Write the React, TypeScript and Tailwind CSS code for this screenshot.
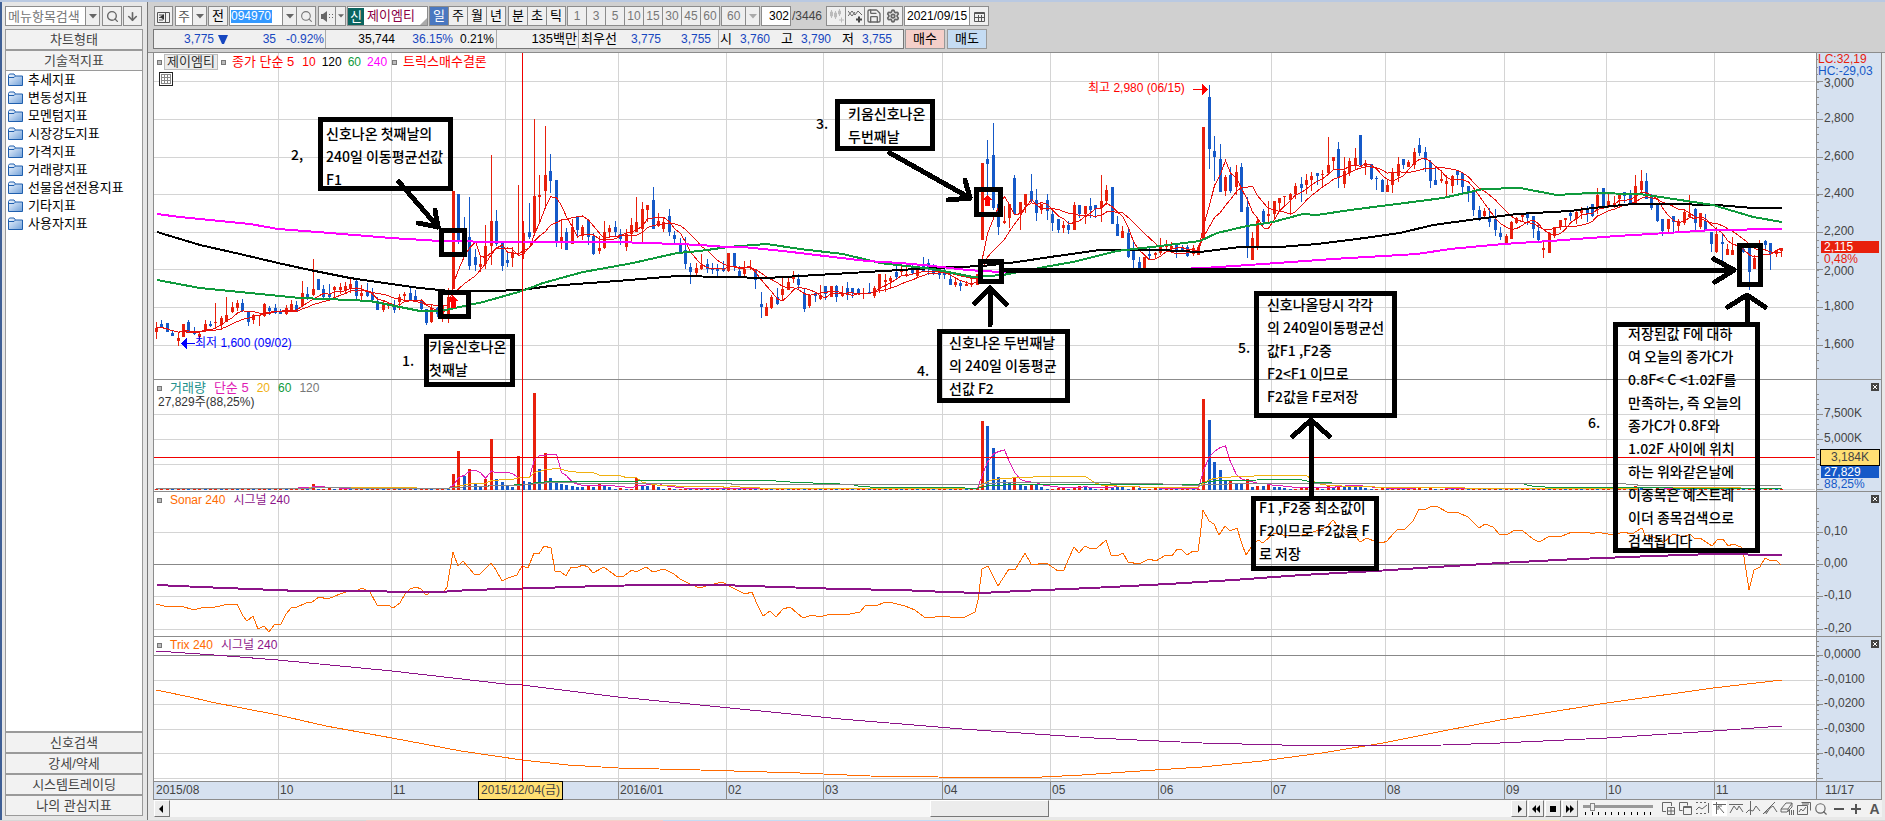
import type { ReactNode } from 'react'
import { ArrowDown, Save, Search, Settings } from 'lucide-react'

type Point = [number, number]
// direction, high, body top, body bottom, low
type Candle = [string, number, number, number, number]

const PLOT = { x: 154, y: 53, w: 1662, h: 728 }
const STEP = 5.3987

const CANDLE_DATA = `
r322 328 332 339|b320 324 327 327|b323 323 332 332|b331 333 336 336|r333 338 341 346|r324 324 337 337|b320 322 332 332|b327 332 334 335|r332 334 337 340|r320 324 331 332
b321 324 326 327|r303 322 323 327|r316 318 325 330|r297 315 322 322|r302 307 312 313|r300 303 308 311|b299 303 311 312|b311 311 322 326|r314 315 320 324|r315 315 316 326
r303 304 316 317|b306 308 311 315|b304 308 313 314|b309 311 314 314|r305 308 314 315|r300 304 311 312|b301 305 311 312|r281 293 306 306|b287 294 298 300|r259 289 295 296
b279 279 290 290|b285 289 297 299|b284 294 297 298|r286 287 290 300|r283 287 290 294|r282 286 290 293|r278 284 289 293|b280 281 296 299|r285 293 296 300|b283 292 296 297
b288 293 300 302|b297 301 310 310|r300 304 310 312|r302 303 304 309|b300 305 310 313|r294 297 302 310|r292 294 296 300|b288 293 300 301|b290 296 300 302|b299 300 309 310
b309 309 323 325|r304 308 322 323|b307 308 314 317|r300 306 316 322|r288 297 314 323|r191 191 289 289|b194 194 241 244|b217 236 246 250|b197 237 266 270|b249 257 265 271
r257 264 267 272|r225 246 264 269|r155 221 246 265|b210 221 244 246|b243 243 266 271|b253 260 263 267|r247 252 258 267|r185 253 254 254|r221 233 254 259|b203 232 237 239
r119 196 233 236|r175 195 197 224|r126 175 191 206|b154 171 181 193|b180 180 241 247|r221 237 241 249|b228 232 250 250|r219 227 244 244|b217 217 230 237|r225 227 236 240
b220 220 237 245|b233 236 254 255|r236 248 251 254|r221 232 248 249|r225 228 232 237|b221 227 232 237|b229 234 239 245|r229 234 247 251|r218 225 234 243|r197 222 232 232
r202 209 229 242|r205 205 210 222|b187 200 229 229|r213 221 226 227|r218 222 229 232|b209 216 232 236|b231 235 239 244|b238 243 253 254|b237 250 264 269|b263 267 272 284
r263 268 273 277|r254 265 269 270|b259 264 269 273|b263 268 270 274|b264 269 271 278|b261 268 271 272|r253 253 271 272|b253 253 267 271|b266 271 277 278|r261 269 274 276
r260 267 268 270|b269 270 280 289|b292 304 307 318|r303 307 316 316|r295 297 308 309|b288 297 304 305|r276 289 295 300|r276 282 290 290|r271 277 279 283|b274 279 285 290
b288 293 309 312|r294 295 306 308|b292 293 296 302|r285 295 299 300|b286 286 294 300|r286 286 297 297|b285 286 297 302|r286 293 296 297|b282 288 295 300|b288 288 293 298
b288 289 293 295|r288 293 294 299|b283 292 293 294|r286 288 296 298|r274 274 289 293|r274 280 282 292|r276 278 281 288|b266 272 277 280|r266 269 272 275|r267 274 276 277
b265 268 273 274|r266 270 276 278|b257 264 272 272|b259 263 268 275|b264 266 273 275|b270 271 275 279|b268 273 275 279|b274 279 285 285|r278 282 285 287|b281 283 286 291
r281 284 286 286|r278 283 285 287|r274 274 285 285|r163 163 240 240|b140 159 164 200|b123 155 208 210|b204 204 227 235|r206 221 223 224|r204 204 218 228|b175 178 214 214
r202 202 213 230|r194 194 205 213|b174 191 200 202|b189 200 213 221|r204 204 210 214|b194 200 211 220|b210 214 223 231|b219 219 230 233|r221 225 228 233|b221 225 230 234
r202 205 230 230|b205 205 214 218|r206 206 214 224|b198 206 210 218|b205 205 209 218|r175 201 208 222|r185 190 201 205|b187 187 224 224|b216 224 236 236|r226 231 238 238
b229 233 257 258|b242 250 260 268|b257 262 269 269|r257 257 268 268|b246 254 256 260|r252 253 255 259|r238 246 253 255|r240 245 247 250|r242 246 249 253|b243 245 250 258
b245 247 251 252|b245 247 256 257|r245 248 254 256|r245 247 255 255|r127 127 240 240|b85 97 149 169|b136 151 157 181|b144 159 192 192|r175 177 191 196|b167 175 191 193
r165 172 187 195|b163 167 212 212|b197 207 247 258|r232 238 260 260|r219 221 248 250|b209 211 222 225|r201 214 216 224|r201 201 214 218|r198 198 203 212|r196 196 197 206
r193 194 200 215|r183 186 194 199|b177 184 188 202|r174 180 185 194|r172 176 180 191|b173 173 176 185|r170 174 175 188|r137 165 173 174|r157 157 161 170|b142 149 178 188
r157 171 184 188|r158 161 173 176|r148 158 165 170|b135 135 165 167|r160 163 166 175|b164 164 179 180|b176 178 179 190|b179 180 192 192|r179 185 192 192|r168 172 185 193
r157 164 176 182|b159 159 165 169|r160 162 167 167|r148 152 165 169|b138 145 153 156|b147 152 160 172|b160 162 181 188|b167 180 185 185|r170 179 181 183|r175 181 184 196
r175 176 186 193|b170 170 175 185|b173 173 187 195|b186 186 191 202|b190 191 210 216|b206 210 218 221|r208 211 216 218|b208 218 222 227|b209 219 230 236|b227 233 237 240
r234 236 243 244|r221 222 239 239|r217 218 223 224|r213 214 217 222|b213 214 218 225|b216 216 229 238|b224 231 240 243|r242 248 250 258|r232 233 253 253|r227 227 236 238
r220 220 227 230|r218 218 220 227|b210 213 216 221|r209 212 219 224|r207 209 213 219|b206 209 214 222|b204 204 216 217|r188 195 207 214|b188 188 207 207|r192 201 206 208
r196 203 207 208|r194 195 199 208|b192 192 196 203|b190 195 203 205|r175 186 203 203|r170 181 190 195|b173 181 199 199|b194 196 208 210|b203 203 221 222|b219 219 231 236
r219 219 229 233|b216 216 222 232|r219 221 226 233|r210 212 223 225|r195 214 217 217|b208 209 223 231|r213 213 227 229|b214 221 231 231|b232 232 244 252|r227 234 252 253
b233 242 244 261|r244 249 255 255|r237 250 255 255|b244 247 252 254|b247 249 252 253|b247 248 272 290|r255 258 269 269|r240 244 250 252|b240 241 245 250|b243 243 254 270
r250 250 254 257|r248 248 251 257`

const candles: Candle[] = CANDLE_DATA.trim()
  .split(/[|\n]/)
  .map((c) => {
    const [hi, top, bottom, low] = c.slice(1).split(' ').map(Number)
    return [c[0], hi, top, bottom, low]
  })

// bars that stand out; all other days are almost flat
const VOLUME_PEAKS: Record<number, number> = {
  27: 3, 29: 6, 55: 16, 56: 39, 57: 14, 58: 21, 59: 6, 60: 4, 61: 11, 62: 51, 63: 11, 64: 8, 65: 5, 66: 3,
  67: 34, 68: 9, 69: 8, 70: 97, 71: 21, 72: 37, 73: 12, 74: 9, 75: 6, 76: 5, 77: 4, 78: 3, 79: 3, 80: 5, 81: 3,
  82: 6, 83: 4, 84: 3, 89: 12, 90: 5, 91: 4, 92: 6, 93: 3, 153: 69, 154: 64, 155: 42, 156: 13, 157: 10, 158: 8,
  159: 13, 160: 6, 161: 4, 162: 6, 163: 5, 164: 3, 168: 3, 171: 4, 172: 3, 176: 5, 177: 3, 178: 3, 179: 3,
  181: 4, 194: 91, 195: 70, 196: 28, 197: 20, 198: 9, 199: 10, 200: 7, 201: 7, 202: 11, 203: 3, 204: 4, 205: 4,
  206: 5, 207: 3, 208: 3, 213: 3, 217: 4, 218: 3, 219: 5, 220: 4, 221: 4, 222: 3, 223: 3, 234: 3, 274: 4, 275: 3,
}
const volumes = candles.map((_, i) => VOLUME_PEAKS[i] ?? 1 + ((i * 7) % 3) / 3)

const candleX = (i: number) => Math.round(156 + i * STEP) + 0.5

function average(values: number[], period: number): Point[] {
  return values.map((_, i) => {
    const part = values.slice(Math.max(0, i - period + 1), i + 1)
    return [candleX(i), part.reduce((a, b) => a + b, 0) / part.length]
  })
}

const closes = candles.map((c) => (c[0] === 'r' ? c[2] : c[3]))
const toVolumeY = (pts: Point[]): Point[] => pts.map(([x, v]) => [x, 489.5 - v])

const parse = (s: string): Point[] => s.split(' ').map((p) => p.split(',').map(Number) as Point)
const join = (pts: Point[]) => pts.map((p) => p.join(',')).join(' ')

const MA240 = parse(
  '157,214 180,217 250,224 278,229 330,233 391,238 440,241 505,242 617,242 677,244 700,245 727,247 743,247 783,251 833,257 867,261 900,263 933,266 967,270 1000,272 1100,272 1204,268 1263,264 1333,259 1417,254 1450,249 1503,244 1550,241 1617,236 1667,233 1713,230 1782,229'
)
const MA120 = parse(
  '157,232 200,245 240,254 278,263 310,270 350,278 391,284 420,288 450,291 490,291 522,290 550,286 617,281 677,276 727,277 767,278 800,276 867,272 933,268 983,266 1017,262 1050,257 1100,250 1160,250 1200,252 1240,247 1280,247 1317,244 1357,239 1400,233 1433,225 1477,219 1517,214 1570,211 1593,208 1633,204 1667,204 1717,205 1753,208 1782,208'
)
const MA60 = parse(
  '157,280 200,288 250,293 300,298 350,300 370,301 400,307 420,311 441,311 455,308 483,302 522,291 543,283 583,272 600,269 633,263 677,253 700,251 728,247 767,244 800,249 843,254 880,263 933,269 973,277 1003,275 1050,266 1073,262 1117,251 1160,246 1200,241 1217,233 1247,226 1273,222 1303,214 1317,215 1350,210 1397,204 1443,198 1483,189 1520,188 1557,195 1590,193 1640,194 1667,198 1713,205 1753,217 1782,222'
)
const SONAR = parse(
  '156,604 168,607 181,606 194,610 204,607 211,608 224,605 237,604 243,616 247,621 253,616 258,629 264,626 269,632 274,625 281,624 286,614 291,608 297,607 306,603 312,602 319,597 328,599 340,594 349,591 355,592 362,588 370,592 377,605 388,605 393,608 400,603 405,594 410,589 416,587 421,589 426,595 431,592 443,593 447,587 453,552 458,566 463,561 474,574 480,574 491,563 496,570 502,581 508,578 517,575 522,566 528,568 534,553 539,554 544,546 551,548 555,571 561,572 566,576 571,567 578,567 583,565 588,567 593,573 604,567 616,576 624,576 632,570 636,572 646,567 653,572 664,569 674,574 680,579 688,583 699,588 710,585 722,582 735,589 745,594 752,592 757,604 763,616 770,611 776,617 783,609 790,607 797,613 803,618 812,615 820,617 830,614 845,615 860,612 866,605 876,606 885,602 893,603 905,606 915,610 924,617 935,617 945,616 955,618 965,617 975,612 978,600 982,569 988,566 998,586 1009,569 1015,570 1025,553 1031,564 1036,565 1041,563 1048,564 1058,571 1064,570 1069,558 1074,547 1079,553 1085,546 1091,549 1097,548 1106,540 1111,555 1117,556 1123,553 1128,562 1139,564 1149,559 1156,561 1166,555 1172,556 1177,549 1182,550 1187,555 1193,551 1198,551 1200,537 1203,510 1209,521 1214,524 1219,535 1225,526 1230,531 1237,528 1241,541 1246,555 1252,546 1258,540 1263,543 1274,533 1283,535 1290,536 1302,535 1313,532 1327,527 1333,520 1340,529 1346,535 1351,530 1360,542 1367,538 1376,542 1382,543 1387,541 1394,533 1398,529 1404,530 1413,521 1419,509 1426,509 1432,506 1438,507 1447,512 1457,512 1468,517 1479,528 1485,524 1493,527 1500,535 1508,534 1515,530 1523,531 1533,539 1539,542 1550,536 1562,536 1572,532 1587,532 1593,534 1597,532 1613,535 1623,532 1632,534 1642,528 1645,535 1657,538 1663,543 1673,534 1683,537 1690,534 1695,539 1700,538 1712,546 1717,540 1723,539 1728,546 1733,544 1741,547 1744,557 1749,590 1754,570 1760,567 1765,558 1771,561 1776,560 1781,565'
)
const SONAR_SIGNAL = parse(
  '157,585 200,587 250,589 300,591 380,591 393,592 440,592 470,590 540,588 600,586 650,585 720,585 780,587 841,589 900,590 946,592 982,593 1019,591 1091,588 1168,584 1233,580 1302,575 1375,571 1436,567 1500,563 1577,559 1653,556 1713,554 1782,555'
)
const TRIX = parse(
  '156,690 190,697 211,702 278,715 326,726 392,738 461,751 522,760 568,765 618,768 700,770 800,773 870,776 938,777 1022,778 1082,775 1140,771 1202,767 1262,761 1322,753 1383,743 1443,731 1500,720 1533,715 1600,704 1713,688 1782,680'
)
const TRIX_SIGNAL = parse(
  '156,651 214,655 278,660 392,671 505,684 522,685 618,697 700,705 841,719 962,729 1094,738 1202,743 1322,746 1443,745 1500,743 1607,738 1713,731 1782,726'
)

const MONTHS: [number, string][] = [
  [278, '10'], [391, '11'], [505, ''], [618, '2016/01'], [726, '02'], [823, '03'], [942, '04'], [1050, '05'],
  [1158, '06'], [1271, '07'], [1385, '08'], [1504, '09'], [1606, '10'], [1714, '11'],
]
const GRID_ROWS = [81, 119, 157, 194, 232, 269, 307, 345, 414, 439, 464, 489, 532, 596, 629, 680, 704, 729, 753, 778]

// x, y, right, bottom
const BOXES = [
  [318, 117, 453, 191], [835, 99, 935, 151], [424, 334, 515, 387], [937, 329, 1070, 403], [1254, 291, 1397, 418],
  [1251, 496, 1379, 571], [1613, 322, 1760, 553], [439, 228, 467, 257], [438, 290, 471, 319], [974, 187, 1003, 217],
  [978, 259, 1004, 284], [1737, 243, 1763, 287],
]
const ARROWS = [
  'M399 182L438 227M418 223L438 227L435 210',
  'M890 153L970 198M948 200L970 198L965 180',
  'M990 325V288M975 303L990 288L1006 304',
  'M1006 270H1734M1714 259L1734 270L1715 282',
  'M1747 322V295M1728 307L1747 295L1765 307',
  'M1311 496V420M1293 436L1311 420L1329 436',
]

// left edge, top of the first line, text
const NOTES: [number, number, string[]][] = [
  [291, 143, ['2,']],
  [326, 122, ['신호나온 첫째날의', '240일 이동평균선값', 'F1']],
  [402, 349, ['1.']],
  [429, 335, ['키움신호나온', '첫째날']],
  [816, 112, ['3.']],
  [848, 102, ['키움신호나온', '두번째날']],
  [917, 359, ['4.']],
  [949, 331, ['신호나온 두번째날', '의 240일 이동평균', '선값 F2']],
  [1238, 336, ['5.']],
  [1267, 293, ['신호나올당시 각각', '의 240일이동평균선', '값F1 ,F2중', 'F2<F1 이므로', 'F2값을 F로저장']],
  [1259, 496, ['F1 ,F2중 최소값이', 'F2이므로 F2값을 F', '로 저장']],
  [1588, 411, ['6.']],
  [
    1628,
    322,
    [
      '저장된값 F에 대하',
      '여 오늘의 종가C가',
      '0.8F< C <1.02F를',
      '만족하는, 즉 오늘의',
      '종가C가 0.8F와',
      '1.02F 사이에 위치',
      '하는 위와같은날에',
      '이종목은 예스트레',
      '이더 종목검색으로',
      '검색됩니다',
    ],
  ],
]

const left = (x: number) => `${((x - PLOT.x) / PLOT.w) * 100}%`
const top = (y: number) => `${((y - PLOT.y) / PLOT.h) * 100}%`

const BTN = 'flex h-5 shrink-0 items-center justify-center border border-[#8c8c8c] bg-[#efefef]'

function Caret({ light }: { light?: boolean }) {
  return (
    <svg width="8" height="5" viewBox="0 0 8 5" className={light ? 'fill-[#aaa]' : 'fill-[#666]'}>
      <path d="M0 0H8L4 4.5Z" />
    </svg>
  )
}

function Folder() {
  return (
    <svg width="16" height="14" viewBox="0 0 16 14" className="shrink-0">
      <defs>
        <linearGradient id="folder" x1="0" y1="0" x2="1" y2="1">
          <stop offset="0" stopColor="#f4f9ff" />
          <stop offset="1" stopColor="#6f9fd8" />
        </linearGradient>
      </defs>
      <path d="M.5 12.5V2.5L1.5 1H6L7.5 3H14.5V12.5Z" fill="url(#folder)" stroke="#1f5fae" />
      <path d="M.5 4.5H6L7.5 3" fill="none" stroke="#1f5fae" />
    </svg>
  )
}

function Sidebar() {
  const items = [
    '추세지표', '변동성지표', '모멘텀지표', '시장강도지표', '가격지표', '거래량지표', '선물옵션전용지표', '기타지표', '사용자지표',
  ]
  const head = 'block w-full border border-[#9a9a9a] bg-[#f2f2f2] text-center text-[13px] text-[#444]'
  return (
    <aside className="flex w-[148px] shrink-0 flex-col border-l-2 border-[#3f5f95] border-r border-r-[#777] bg-[#e6e6e6] pt-1 pr-[4px] pb-1 pl-[3px]">
      <div className="flex h-5 w-[137px] shrink-0 items-center">
        <input
          aria-label="메뉴항목검색"
          placeholder="메뉴항목검색"
          className="h-5 w-[81px] border border-[#8c8c8c] bg-white px-[2px] text-[13px] placeholder:text-[#777]"
        />
        <button aria-label="목록" className={`${BTN} -ml-px w-[15px]`}>
          <Caret />
        </button>
        <button aria-label="검색" className={`${BTN} ml-[2px] w-5`}>
          <Search size={13} strokeWidth={2.5} className="text-[#666]" />
        </button>
        <button aria-label="아래로" className={`${BTN} ml-auto w-[19px]`}>
          <ArrowDown size={13} strokeWidth={3} className="text-[#666]" />
        </button>
      </div>
      <button className={`${head} mt-[3px] h-[21px] shrink-0 leading-[19px]`}>차트형태</button>
      <button className={`${head} h-[21px] shrink-0 leading-[19px]`}>기술적지표</button>
      <ul className="-mt-px flex-1 overflow-hidden border border-[#9a9a9a] bg-white">
        {items.map((item) => (
          <li key={item} className="flex h-[18px] items-center gap-1 pl-[2px] text-[13px] whitespace-nowrap text-black">
            <Folder />
            {item}
          </li>
        ))}
      </ul>
      {['신호검색', '강세/약세', '시스템트레이딩', '나의 관심지표'].map((label) => (
        <button key={label} className={`${head} h-[21px] shrink-0 leading-[19px]`}>
          {label}
        </button>
      ))}
    </aside>
  )
}

function Toolbar() {
  return (
    <div className="flex h-5 items-center pl-px text-[13px] text-black">
      <button aria-label="패널" className={`${BTN} w-[19px]`}>
        <svg width="13" height="13" viewBox="0 0 13 13" fill="none" stroke="#555">
          <path d="M.5 2.5H12.5V12.5H.5ZM8.5 2V12M2 5H6M2 7.5H6M2 10H6" />
          <path d="M7 4L3 7L7 10Z" fill="#333" stroke="none" />
        </svg>
      </button>
      <div className="relative ml-[2px] w-8 shrink-0">
        <select aria-label="구분" className="h-5 w-8 appearance-none border border-[#8c8c8c] bg-white pl-[2px] text-[13px] leading-none text-[#555]">
          <option>주</option>
        </select>
        <span className="pointer-events-none absolute top-0 right-0 flex h-5 w-[15px] items-center justify-center border border-[#8c8c8c] bg-[#efefef]">
          <Caret />
        </span>
      </div>
      <button className={`${BTN} ml-[1px] w-5`}>전</button>
      <div className="ml-px flex h-5 w-[54px] shrink-0 items-center border border-[#8c8c8c] bg-white pl-px">
        <input
          aria-label="종목코드"
          defaultValue="094970"
          className="h-[13px] w-[41px] bg-[#3399ff] text-xs text-white outline-none"
        />
      </div>
      <button aria-label="종목 목록" className={`${BTN} -ml-px w-[15px]`}>
        <Caret />
      </button>
      <button aria-label="종목 검색" className={`${BTN} -ml-px w-5`}>
        <Search size={13} strokeWidth={2} className="text-[#777]" />
      </button>
      <button aria-label="소리" className={`${BTN} ml-[2px] w-[18px]`}>
        <svg width="13" height="11" viewBox="0 0 13 11" fill="#666">
          <path d="M0 3H2L6 0V11L2 8H0ZM8 3H9V4H8ZM8 6H9V7H8ZM11 3H12V4H11ZM11 6H12V7H11Z" />
        </svg>
      </button>
      <button aria-label="소리 설정" className={`${BTN} -ml-px w-[11px]`}>
        <svg width="6" height="4" viewBox="0 0 8 5" className="fill-[#666]">
          <path d="M0 0H8L4 4.5Z" />
        </svg>
      </button>
      <div className="relative ml-px flex h-5 w-[81px] shrink-0 items-center border border-[#8c8c8c] bg-white">
        <span className="h-[17px] w-4 bg-[#0b6560] text-center leading-[17px] text-white">신</span>
        <span className="ml-[3px] text-[#8b0045]">제이엠티</span>
        <svg width="7" height="7" viewBox="0 0 7 7" className="absolute right-0 bottom-0 fill-[#aaa]">
          <path d="M7 0V7H0Z" />
        </svg>
      </div>
      <div className="ml-px flex shrink-0">
        {['일', '주', '월', '년'].map((label) => (
          <button
            key={label}
            className={`-mr-px flex h-5 w-5 items-center justify-center border border-[#8c8c8c] ${label === '일' ? 'bg-[#4a78c0] text-white' : 'bg-[#efefef]'}`}
          >
            {label}
          </button>
        ))}
      </div>
      <div className="ml-[3px] flex shrink-0">
        {['분', '초', '틱'].map((label) => (
          <button key={label} className={`${BTN} -mr-px w-5`}>
            {label}
          </button>
        ))}
      </div>
      <div className="ml-[2px] flex shrink-0 text-xs text-[#777]">
        {['1', '3', '5', '10', '15', '30', '45', '60'].map((label) => (
          <button key={label} className={`${BTN} -mr-px w-5`}>
            {label}
          </button>
        ))}
      </div>
      <div className="relative ml-[2px] w-[39px] shrink-0">
        <select aria-label="주기" className="h-5 w-[39px] appearance-none border border-[#8c8c8c] bg-[#efefef] pl-[5px] text-xs leading-none text-[#777]">
          <option>60</option>
        </select>
        <span className="pointer-events-none absolute top-0 right-0 flex h-5 w-[15px] items-center justify-center border border-[#8c8c8c]">
          <Caret light />
        </span>
      </div>
      <input
        aria-label="봉 개수"
        defaultValue="302"
        className="ml-px h-5 w-[30px] border border-[#8c8c8c] bg-white pr-px text-right text-xs"
      />
      <span className="w-[33px] shrink-0 pl-px text-xs text-[#444]">/3446</span>
      <div className="ml-[2px] flex shrink-0">
        <button aria-label="봉 추가" className={`${BTN} -mr-px w-5`}>
          <svg width="15" height="14" viewBox="0 0 15 14" stroke="#bbb" fill="#bbb">
            <path d="M2.5 1V9M6.5 2V10M10.5 0V7M10 11H15M12.5 8.500V13.500" fill="none" />
            <path d="M1.500 3H3.500V7H1.500ZM5.500 4H7.500V8H5.500ZM9.500 2H11.500V5H9.500Z" />
          </svg>
        </button>
        <button aria-label="지표 추가" className={`${BTN} -mr-px w-5`}>
          <svg width="15" height="14" viewBox="0 0 15 14" fill="none" stroke="#666">
            <path d="M0 7L4 2L7 6L10 2L14 6M0 2L4 7L7 3" />
            <path d="M8 10.500H14M11 7.500V13.500" strokeWidth="2" stroke="#444" />
          </svg>
        </button>
        <button aria-label="저장" className={`${BTN} -mr-px w-5`}>
          <Save size={16} strokeWidth={2} className="text-[#666]" />
        </button>
        <button aria-label="설정" className={`${BTN} w-5`}>
          <Settings size={14} strokeWidth={3} className="text-[#666]" />
        </button>
      </div>
      <input
        aria-label="날짜"
        defaultValue="2021/09/15"
        className="ml-px h-5 w-[66px] shrink-0 border border-[#8c8c8c] bg-white pl-[2px] text-xs"
      />
      <button aria-label="달력" className={`${BTN} -ml-px w-5`}>
        <svg width="11" height="11" viewBox="0 0 11 11" fill="none" stroke="#555">
          <path d="M.5 1.500H10.500V10.500H.5ZM.5 2.500H10.500M.5 6.500H10.500M4.500 4V10M7.500 4V10" />
        </svg>
      </button>
    </div>
  )
}

function Quote({ className, children }: { className: string; children: ReactNode }) {
  return <span className={`shrink-0 text-right whitespace-nowrap ${className}`}>{children}</span>
}

function QuoteBar() {
  const blue = 'text-xs text-[#1747c0]'
  return (
    <div className="mt-[3px] flex h-5 items-center text-[13px] text-black">
      <div className="flex h-5 w-[751px] shrink-0 items-center border border-[#777] bg-[#f0f0f0]">
        <div className="flex h-full w-[172px] items-center border-r border-[#aaa]">
          <Quote className={`flex w-[74px] items-center justify-end gap-1 ${blue}`}>
            3,775
            <svg width="10" height="9" viewBox="0 0 10 9" fill="#1747c0">
              <path d="M0 0H10L6 9H4Z" />
            </svg>
          </Quote>
          <Quote className={`w-12 ${blue}`}>35</Quote>
          <Quote className={`w-12 ${blue}`}>-0.92%</Quote>
        </div>
        <div className="flex h-full w-[171px] items-center border-r border-[#aaa]">
          <Quote className="w-[69px] text-xs">35,744</Quote>
          <Quote className={`w-[58px] ${blue}`}>36.15%</Quote>
          <Quote className="w-[41px] text-xs">0.21%</Quote>
        </div>
        <div className="flex h-full w-[82px] items-center border-r border-[#aaa]">
          <Quote className="w-20">135백만</Quote>
        </div>
        <div className="flex h-full w-[140px] items-center border-r border-[#aaa]">
          <Quote className="w-[38px]">최우선</Quote>
          <Quote className={`w-11 ${blue}`}>3,775</Quote>
          <Quote className={`w-[50px] ${blue}`}>3,755</Quote>
        </div>
        <Quote className="w-[13px]">시</Quote>
        <Quote className={`w-[38px] ${blue}`}>3,760</Quote>
        <Quote className="w-[23px]">고</Quote>
        <Quote className={`w-[38px] ${blue}`}>3,790</Quote>
        <Quote className="w-[23px]">저</Quote>
        <Quote className={`w-[38px] ${blue}`}>3,755</Quote>
      </div>
      <button className="ml-px h-5 w-10 shrink-0 border border-[#999] bg-[#f5cfc9] leading-[18px]">매수</button>
      <button className="ml-[2px] h-5 w-10 shrink-0 border border-[#999] bg-[#c5dcf3] leading-[18px]">매도</button>
    </div>
  )
}

function Line({ points, color, width = 1 }: { points: Point[]; color: string; width?: number }) {
  return <polyline points={join(points)} fill="none" stroke={color} strokeWidth={width} />
}

function ChartDrawing() {
  const wicks = (dir: string) =>
    candles.map((c, i) => (c[0] === dir ? `M${candleX(i)} ${c[1]}V${c[4]}` : '')).join('')
  const bodies = (dir: string) =>
    candles.map((c, i) => (c[0] === dir ? `M${candleX(i)} ${c[2]}V${Math.max(c[3], c[2] + 1)}` : '')).join('')
  const bars = (up: boolean) =>
    volumes.map((v, i) => (v > (volumes[i - 1] ?? 0) === up ? `M${candleX(i)} 490V${490 - v}` : '')).join('')

  return (
    <svg
      viewBox={`${PLOT.x} ${PLOT.y} ${PLOT.w} ${PLOT.h}`}
      preserveAspectRatio="none"
      shapeRendering="crispEdges"
      className="absolute inset-0 h-full w-full"
    >
      <path
        d={MONTHS.map(([x]) => `M${x + 0.5} 53V781`).join('') + GRID_ROWS.map((y) => `M154 ${y + 0.5}H1815`).join('')}
        stroke="#d4d4d4"
      />
      <path d="M154 564.500H1815M154 655.500H1815" stroke="#888" />

      <path d={wicks('r')} stroke="#e8200c" />
      <path d={wicks('b')} stroke="#1559c8" />
      <path d={bodies('r')} stroke="#e8200c" strokeWidth={3} />
      <path d={bodies('b')} stroke="#1559c8" strokeWidth={3} />
      <Line points={average(closes, 5)} color="#e8100c" />
      <Line points={average(closes, 10)} color="#e8100c" />
      <Line points={MA120} color="#000" width={2} />
      <Line points={MA60} color="#0f9a3c" width={2} />
      <Line points={MA240} color="#ff00ff" width={2} />

      <path d={bars(true)} stroke="#e8200c" strokeWidth={3} />
      <path d={bars(false)} stroke="#1559c8" strokeWidth={3} />
      <Line points={toVolumeY(average(volumes, 5))} color="#e01cb4" />
      <Line points={toVolumeY(average(volumes, 20))} color="#f0b010" />
      <Line points={toVolumeY(average(volumes, 60))} color="#0f9a3c" />
      <Line points={toVolumeY(average(volumes, 120))} color="#888" />

      <Line points={SONAR} color="#ff6a00" />
      <Line points={SONAR_SIGNAL} color="#8c1488" width={2} />
      <Line points={TRIX} color="#ff6a00" />
      <Line points={TRIX_SIGNAL} color="#8c1488" />

      <path d="M154 379.500H1816M154 491.500H1816M154 636.500H1816" stroke="#8c8c8c" />
      <path d="M154 457.500H1815M522.500 53V781" stroke="#f00000" />

      <path d="M186 343.500H195" stroke="#00f" />
      <path d="M181 343.500L187 338V349Z" fill="#00f" />
      <path d="M1193 89.500H1203" stroke="#f00" />
      <path d="M1208 89.500L1202 84V95Z" fill="#f00" />
      <path d="M453 296L458 301H456V308H451V301H448ZM987 195L992 200H990V206H985V200H982Z" fill="#f00" />

      {BOXES.map(([x, y, r, b]) => (
        <rect key={`${x}-${y}`} x={x + 2.5} y={y + 2.5} width={r - x - 5} height={b - y - 5} fill="none" stroke="#000" strokeWidth={5} />
      ))}
      <path d={ARROWS.join('')} fill="none" stroke="#000" strokeWidth={5} strokeLinecap="round" strokeLinejoin="round" />
    </svg>
  )
}

function Bullet() {
  return <i className="block size-[5px] shrink-0 border border-[#777] bg-[#bbb]" />
}

function Legend({ items }: { items: [string, string][] }) {
  return (
    <div className="flex h-4 items-center gap-2 pl-[3px] whitespace-nowrap">
      <Bullet />
      {items.map(([label, color]) => (
        <span key={label} className={color}>
          {label}
        </span>
      ))}
    </div>
  )
}

function Plot() {
  return (
    <div className="relative min-w-0 flex-1 overflow-hidden bg-white text-xs">
      <ChartDrawing />
      <div className="relative grid h-full grid-rows-[327fr_112fr_145fr_144fr]">
        <div className="min-h-0 pt-px">
          <div className="flex h-4 items-center pl-[3px] text-[13px] whitespace-nowrap text-[#f00]">
            <Bullet />
            <span className="ml-[2px] h-4 w-[54px] border border-[#bbb] bg-[#ececec] text-center leading-[14px] text-[#333]">
              제이엠티
            </span>
            <span className="mr-[6px] ml-[3px]">
              <Bullet />
            </span>
            <span>종가 단순 5</span>
            <span className="ml-2 text-xs">10</span>
            <span className="ml-[6px] text-xs text-black">120</span>
            <span className="ml-[6px] text-xs text-[#0f9a3c]">60</span>
            <span className="mr-[5px] ml-[6px] text-xs text-[#f0f]">240</span>
            <Bullet />
            <span className="ml-[6px]">트릭스매수결론</span>
          </div>
          <svg width="14" height="14" viewBox="0 0 14 14" className="mt-[2px] ml-[5px]" fill="none" shapeRendering="crispEdges">
            <path d="M.5 .5H13.500V13.500H.5Z" fill="#fff" stroke="#222" />
            <path d="M2.500 2.500H11.500V11.500H2.500ZM2.500 5.500H11.500M2.500 8.500H11.500M5.500 2.500V11.500M8.500 2.500V11.500" stroke="#888" />
          </svg>
        </div>
        <div className="min-h-0">
          <Legend
            items={[
              ['거래량', 'text-[13px] text-[#20908c]'],
              ['단순 5', 'text-[13px] text-[#e01cb4]'],
              ['20', 'text-[#f0b010]'],
              ['60', 'text-[#0f9a3c]'],
              ['120', 'text-[#777]'],
            ]}
          />
          <p className="pl-1 leading-[12px] text-[#333]">27,829주(88,25%)</p>
        </div>
        <div className="min-h-0">
          <Legend items={[['Sonar 240', 'text-[#ff6a00]'], ['시그널 240', 'text-[#8c1488]']]} />
        </div>
        <div className="min-h-0">
          <Legend items={[['Trix 240', 'text-[#ff6a00]'], ['시그널 240', 'text-[#8c1488]']]} />
        </div>
      </div>
      <span className="absolute leading-4 whitespace-nowrap text-[#00f]" style={{ left: left(195), top: top(335) }}>
        최저 1,600 (09/02)
      </span>
      <span className="absolute leading-4 whitespace-nowrap text-[#f00]" style={{ left: left(1088), top: top(80) }}>
        최고 2,980 (06/15)
      </span>
      {NOTES.map(([x, y, lines]) => (
        <p
          key={`${x}-${y}`}
          className="absolute font-['Noto_Sans_CJK_KR',sans-serif] text-sm leading-[23px] font-medium whitespace-nowrap text-black"
          style={{ left: left(x), top: top(y) }}
        >
          {lines.map((line) => (
            <span key={line} className="block">
              {line}
            </span>
          ))}
        </p>
      ))}
    </div>
  )
}

// label centre, text
const AXIS_LABELS: [number, string][] = [
  [83, '3,000'], [118, '2,800'], [156, '2,600'], [193, '2,400'], [231, '2,200'], [271, '2,000'], [306, '1,800'],
  [344, '1,600'], [413, '7,500K'], [438, '5,000K'], [531, '0,10'], [563, '0,00'], [595, '-0,10'], [628, '-0,20'],
  [654, '0,0000'], [679, '-0,0100'], [703, '-0,0200'], [728, '-0,0300'], [752, '-0,0400'],
]

function ticks(from: number, to: number, step: number) {
  let d = ''
  for (let y = from; y < to; y += step) d += `M0 ${Math.round(y) + 0.5}H2`
  return d
}

function PriceAxis() {
  return (
    <div className="relative w-[65px] shrink-0 overflow-hidden border-l border-[#8c8c8c] bg-[#d6e1f0] text-xs leading-3 text-[#444]">
      <svg viewBox="0 53 64 728" preserveAspectRatio="none" shapeRendering="crispEdges" className="absolute inset-0 h-full w-full">
        <path
          d={
            ticks(59, 375, 7.53) + ticks(394, 490, 5) + ticks(508, 632, 6.45) + ticks(641, 778, 4.9) +
            [...GRID_ROWS, 564, 655].map((y) => `M0 ${y + 0.5}H6`).join('')
          }
          stroke="#8c8c8c"
        />
        <path d="M0 379.500H64M0 491.500H64M0 636.500H64" stroke="#8c8c8c" />
      </svg>
      {AXIS_LABELS.map(([y, label]) => (
        <span key={label} className="absolute left-[7px]" style={{ top: top(y - 6) }}>
          {label}
        </span>
      ))}
      <div className="absolute top-0 left-px bg-[#d6e1f0] leading-3">
        <p className="text-[#e8200c]">LC:32,19</p>
        <p className="text-[#1559c8]">HC:-29,03</p>
      </div>
      <div className="absolute right-[2px] left-1" style={{ top: top(241) }}>
        <p className="h-3 bg-[#e8200c] pl-[3px] leading-3 text-white">2,115</p>
        <p className="mx-[3px] w-9 leading-3 text-[#e8200c]">0,48%</p>
      </div>
      <div className="absolute right-px left-[3px]" style={{ top: top(449) }}>
        <p className="h-[17px] border border-black bg-[#ffdf73] pl-[10px] leading-[15px]">3,184K</p>
        <p className="mx-px h-3 bg-[#1559c8] pl-[3px] leading-3 text-white">27,829</p>
        <p className="pl-1 leading-3 text-[#1559c8]">88,25%</p>
      </div>
      {[383, 495, 640].map((y) => (
        <button
          key={y}
          aria-label="닫기"
          className="absolute right-[2px] flex size-2 items-center justify-center bg-[#444]"
          style={{ top: top(y) }}
        >
          <svg width="4" height="4" viewBox="0 0 4 4" stroke="#fff">
            <path d="M0 0L4 4M4 0L0 4" />
          </svg>
        </button>
      ))}
    </div>
  )
}

function DateAxis() {
  return (
    <div className="flex h-[19px] shrink-0 border-y border-[#8c8c8c] bg-[#d6e1f0] text-xs leading-[17px] text-[#444]">
      <div className="relative min-w-0 flex-1">
        <span className="pl-[2px]">2015/08</span>
        {MONTHS.map(([x, label]) => (
          <span key={x} className="absolute top-0 h-full border-l border-[#8c8c8c] pl-px" style={{ left: left(x) }}>
            {label}
          </span>
        ))}
        <span
          className="absolute -top-px h-[19px] border border-black bg-[#ffdf73] px-[2px] leading-[16px] whitespace-nowrap"
          style={{ left: left(478) }}
        >
          2015/12/04(금)
        </span>
      </div>
      <span className="w-[65px] border-l border-[#8c8c8c] pl-2">11/17</span>
    </div>
  )
}

const PLAYER: [string, string][] = [
  ['재생', 'M5 2L9 6L5 10Z'],
  ['뒤로', 'M6 2L2 6L6 10ZM10 2L6 6L10 10Z'],
  ['정지', 'M3 3H9V9H3Z'],
  ['앞으로', 'M2 2L6 6L2 10ZM6 2L10 6L6 10Z'],
]
const TOOLS: [string, string][] = [
  ['창 추가', 'M1.500 1.500H10.500V5M1.500 1.500V10.500H5M6.500 6.500H13.500V13.500H6.500ZM6.500 10H13.500M10 6.500V13.500'],
  ['창 겹치기', 'M1.500 1.500H9.500V4.500M1.500 1.500V9.500H4.500M5.500 5.500H13.500V13.500H5.500ZM5.500 6.500H13.500'],
  ['영역', 'M1 1.500H3M5 1.500H7M9 1.500H11M1 12.500H3M5 12.500H7M9 12.500H11M1 9L4 6L7 8L12 4M13.500 2V12'],
  ['선택', 'M1 3.500H14M4.500 1V13M6 5L12 12M6 9V5H10'],
  ['수평선', 'M0 3.500H14M1 12L5 5L8 9L10 5L14 11'],
  ['수직선', 'M4.500 0V14M0 12L3 9L7 10L10 5L14 10'],
  ['추세선', 'M0 13L12 1M3 13L7 7L10 5L14 11M1 12L5 10'],
  ['지우개', 'M1 8L6 2H12L8 8ZM1 8V11H7L12 6V2M8 8V11M9.500 9V14M11.500 9V14M13.500 9V14'],
  ['차트', 'M4.500 1.500H13.500V9.500M.5 4.500H10.500V13.500H.5ZM2 11L4 8L6 10L9 6M5 3H12'],
]

function BottomBar() {
  return (
    <div className="flex h-[17px] shrink-0 items-stretch bg-[#f2f2f2] text-[#666]">
      <button aria-label="이전" className="w-4 border border-t-white border-r-[#777] border-b-[#777] border-l-white bg-[#ececec]">
        <svg width="12" height="12" viewBox="0 0 12 12">
          <path d="M8 2V10L4 6Z" fill="#000" />
        </svg>
      </button>
      <div className="flex min-w-0 flex-1 bg-[#f7f7f7]">
        <span className="flex-[762]" />
        <span className="flex-[118] border border-t-white border-r-[#777] border-b-[#777] border-l-white bg-[#ececec]" />
        <span className="flex-[463]" />
      </div>
      <div className="flex gap-px">
        {PLAYER.map(([name, d]) => (
          <button
            key={name}
            aria-label={name}
            className="flex w-4 items-center justify-center border border-t-white border-r-[#777] border-b-[#777] border-l-white bg-[#ececec]"
          >
            <svg width="12" height="12" viewBox="0 0 12 12">
              <path d={d} fill="#000" />
            </svg>
          </button>
        ))}
      </div>
      <div className="mr-2 ml-[5px] flex w-[70px] shrink-0 flex-col">
        <input
          type="range"
          aria-label="속도"
          defaultValue={10}
          className="mt-px h-[11px] w-full appearance-none bg-transparent [&::-webkit-slider-runnable-track]:h-[3px] [&::-webkit-slider-runnable-track]:bg-[#999] [&::-webkit-slider-thumb]:-mt-[2px] [&::-webkit-slider-thumb]:h-2 [&::-webkit-slider-thumb]:w-[5px] [&::-webkit-slider-thumb]:appearance-none [&::-webkit-slider-thumb]:border [&::-webkit-slider-thumb]:border-[#888] [&::-webkit-slider-thumb]:bg-[#eee]"
        />
        <div className="flex h-[3px] justify-between px-[2px]">
          {Array.from({ length: 11 }, (_, i) => (
            <i key={i} className="w-px bg-black" />
          ))}
        </div>
      </div>
      <div className="flex w-[221px] shrink-0 items-center gap-[2px]">
        {TOOLS.map(([name, d]) => (
          <button key={name} aria-label={name} className={name === '선택' ? 'bg-white' : undefined}>
            <svg width="15" height="15" viewBox="0 0 15 15" fill="none" stroke="#666">
              <path d={d} />
            </svg>
          </button>
        ))}
        <button aria-label="확대경" className="w-[17px]">
          <Search size={14} />
        </button>
        <button aria-label="축소" className="w-[15px]">
          <svg width="12" height="12" viewBox="0 0 12 12" stroke="#555" strokeWidth="2">
            <path d="M1 6H11" />
          </svg>
        </button>
        <button aria-label="확대" className="w-[15px]">
          <svg width="12" height="12" viewBox="0 0 12 12" stroke="#555" strokeWidth="2">
            <path d="M1 6H11M6 1V11" />
          </svg>
        </button>
        <button className="w-[15px] text-sm leading-4 font-bold text-[#555]">A</button>
      </div>
    </div>
  )
}

export default function App() {
  return (
    <div className="flex h-screen min-h-[600px] flex-col overflow-hidden bg-[#e8e8e8] font-['Liberation_Sans','Noto_Sans_CJK_KR',sans-serif]">
      <div className="h-[2px] shrink-0 bg-[#b9c9e2]" />
      <div className="flex min-h-0 flex-1">
        <Sidebar />
        <main className="flex min-w-0 flex-1 flex-col">
          <header className="h-[51px] shrink-0 border-b border-[#8c8c8c] bg-[#d0d0d0] pt-1 pl-[5px]">
            <Toolbar />
            <QuoteBar />
          </header>
          <div className="mr-[3px] ml-[5px] flex min-h-0 flex-1 flex-col border-x border-[#8c8c8c]">
            <div className="flex min-h-0 flex-1">
              <Plot />
              <PriceAxis />
            </div>
            <DateAxis />
          </div>
          <div className="mr-[3px] ml-[5px] pl-px">
            <BottomBar />
          </div>
          <div className="h-[3px] shrink-0" />
        </main>
      </div>
      <div className="flex h-px shrink-0 bg-[#d8d8d8]">
        <i className="ml-[366px] flex-[297] bg-[#f5cfc9]" />
        <i className="flex-[297] bg-[#c5dcf3]" />
        <i className="flex-[600] bg-[#f3e2bd]" />
        <i className="flex-[325]" />
      </div>
    </div>
  )
}
